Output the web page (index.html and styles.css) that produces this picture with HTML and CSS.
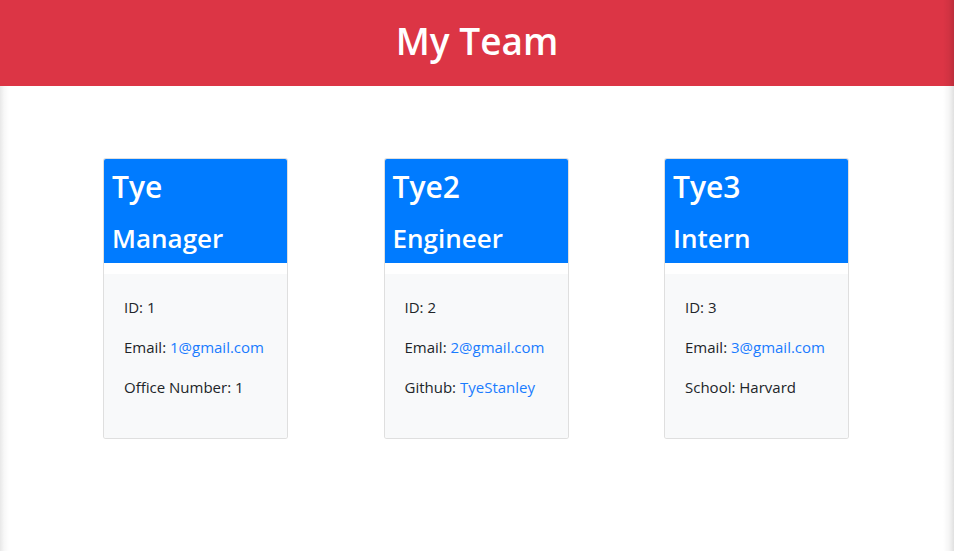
FILE: index.html
```html
<!DOCTYPE html>
<html lang="en">
<head>
<meta charset="utf-8">
<title>My Team</title>
<link rel="stylesheet" href="styles.css">
</head>
<body>
<div class="page">
  <header class="banner">
    <h1 class="banner-title">My Team</h1>
  </header>
  <main class="team">
    <section class="card">
      <div class="card-head">
        <h2 class="name">Tye</h2>
        <h3 class="role">Manager</h3>
      </div>
      <ul class="card-body">
        <li class="item">ID: 1</li>
        <li class="item">Email: <a class="link" href="#">1@gmail.com</a></li>
        <li class="item">Office Number: 1</li>
      </ul>
    </section>
    <section class="card">
      <div class="card-head">
        <h2 class="name">Tye2</h2>
        <h3 class="role">Engineer</h3>
      </div>
      <ul class="card-body">
        <li class="item">ID: 2</li>
        <li class="item">Email: <a class="link" href="#">2@gmail.com</a></li>
        <li class="item">Github: <a class="link" href="#">TyeStanley</a></li>
      </ul>
    </section>
    <section class="card">
      <div class="card-head">
        <h2 class="name">Tye3</h2>
        <h3 class="role">Intern</h3>
      </div>
      <ul class="card-body">
        <li class="item">ID: 3</li>
        <li class="item">Email: <a class="link" href="#">3@gmail.com</a></li>
        <li class="item">School: Harvard</li>
      </ul>
    </section>
  </main>
</div>
</body>
</html>
```

FILE: styles.css
```css
* { box-sizing: border-box; }
html, body { margin: 0; padding: 0; }
body {
  font-family: "Open Sans", "Noto Sans", "Liberation Sans", sans-serif;
  color: #212529;
  background: #fff;
}
.page {
  height: 100vh;
  background: linear-gradient(to right, rgba(0,0,0,0.09), rgba(0,0,0,0.03) 4px, rgba(0,0,0,0) 9px, rgba(0,0,0,0) calc(100% - 11px), rgba(0,0,0,0.04) calc(100% - 5px), rgba(0,0,0,0.12)) #fff;
}
.banner {
  height: 86px;
  background: linear-gradient(to right, rgba(0,0,0,0) calc(100% - 11px), rgba(0,0,0,0.05) calc(100% - 5px), rgba(0,0,0,0.14)) #dc3545;
  display: flex;
  align-items: center;
  justify-content: center;
}
.banner-title {
  margin: 0;
  color: #fff;
  font-size: 37px;
  font-weight: 600;
  line-height: 1.2;
  padding-bottom: 4px;
}
.team {
  display: flex;
  justify-content: center;
  gap: 95.5px;
  padding-top: 72px;
  padding-right: 2px;
}
.card {
  width: 185px;
  flex: 0 0 185px;
  border: 1px solid rgba(0,0,0,0.125);
  border-radius: 3px;
  background: #fff;
  overflow: hidden;
}
.card-head {
  background: #007bff;
  color: #fff;
  padding: 6px 8px 0;
  height: 104px;
  margin-bottom: 11px;
}
.name {
  margin: 0;
  font-size: 30px;
  font-weight: 600;
  line-height: 44px;
}
.role {
  margin: 0;
  font-size: 26px;
  font-weight: 600;
  line-height: 44px;
  margin-top: 7px;
}
.card-body {
  list-style: none;
  margin: 0;
  background: #f8f9fa;
  padding: 21px 0 39px 20px;
  display: flex;
  flex-direction: column;
  gap: 16px;
}
.item {
  font-size: 15px;
  line-height: 24px;
  white-space: nowrap;
}
.link {
  color: #1a7cff;
  text-decoration: none;
}
```
